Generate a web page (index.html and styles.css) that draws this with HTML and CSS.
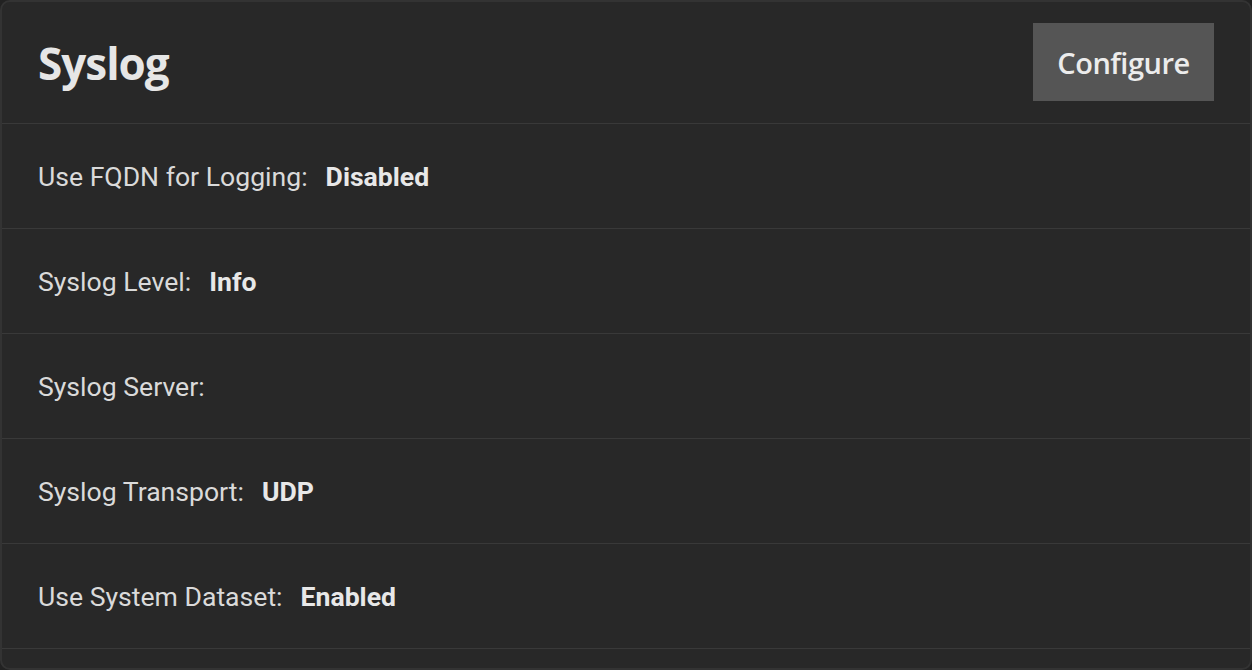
FILE: index.html
```html
<!DOCTYPE html>
<html>
<head>
<meta charset="utf-8">
<link rel="stylesheet" href="styles.css">
</head>
<body>
<div class="card">
  <div class="card-header">
    <h1 class="title">Syslog</h1>
    <button class="btn">Configure</button>
  </div>
  <div class="list">
    <div class="row"><span class="label">Use FQDN for Logging:</span><span class="value">Disabled</span></div>
    <div class="row"><span class="label">Syslog Level:</span><span class="value">Info</span></div>
    <div class="row"><span class="label">Syslog Server:</span><span class="value"></span></div>
    <div class="row"><span class="label">Syslog Transport:</span><span class="value">UDP</span></div>
    <div class="row"><span class="label">Use System Dataset:</span><span class="value">Enabled</span></div>
  </div>
</div>
</body>
</html>
```
FILE: styles.css
```css
html, body {
  margin: 0;
  padding: 0;
  background: #222222;
}
.card {
  box-sizing: border-box;
  width: 1252px;
  height: 670px;
  margin: 0;
  background: #282828;
  border: 2px solid #333333;
  border-radius: 10px;
  overflow: hidden;
  font-family: Roboto, "Liberation Sans", sans-serif;
  color: #dedede;
}
.card-header {
  box-sizing: border-box;
  height: 122px;
  display: flex;
  align-items: flex-start;
  justify-content: space-between;
  padding: 21px 36px 0 36px;
  border-bottom: 1px solid #393939;
}
.title {
  margin: 0;
  line-height: 80px;
  font-family: "Open Sans", sans-serif;
  font-weight: 700;
  font-size: 44px;
  letter-spacing: -1px;
  color: #e6e6e6;
}
.btn {
  box-sizing: border-box;
  width: 181px;
  height: 78px;
  background: #555555;
  border: none;
  border-radius: 0;
  color: #ececec;
  font-family: "Open Sans", sans-serif;
  font-weight: 600;
  font-size: 29px;
  letter-spacing: -0.5px;
  padding: 0;
}
.row {
  box-sizing: border-box;
  height: 105px;
  display: flex;
  align-items: center;
  gap: 18px;
  padding-left: 36px;
  border-bottom: 1px solid #393939;
  font-size: 26.6px;
}
.label {
  color: #dadada;
}
.value {
  font-weight: 700;
  color: #e8e8e8;
}
```
